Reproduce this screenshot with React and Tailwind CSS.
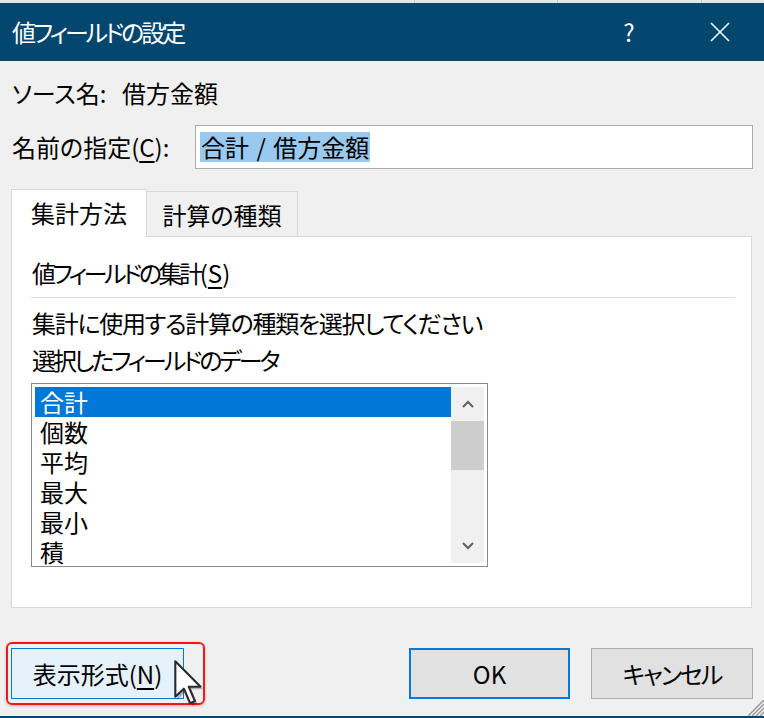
import React from "react";

const items = ["合計", "個数", "平均", "最大", "最小", "積"];

// Windows-style arrow pointer
const Pointer = () => (
  <svg width="30" height="46" viewBox="0 0 14 21.5" className="absolute left-[174px] top-[660px]">
    <path d="M1.6 1.6 L1.6 18.6 L5.6 14.6 L8.6 21.4 L10.9 20.4 L8 13.7 L13.6 13.7 Z" fill="#000" opacity="0.25" />
    <path d="M0.6 0.6 L0.6 17.2 L4.6 13.4 L7.5 20.2 L9.8 19.2 L6.9 12.5 L12.4 12.5 Z" fill="#fff" stroke="#2b2b35" strokeWidth="1" strokeLinejoin="round" />
  </svg>
);

const Grip = () => (
  <svg width="16" height="16" viewBox="0 0 16 16" className="absolute right-0 bottom-[2px]">
    {[0, 4, 8, 12].map((o) => (
      <line key={o} x1={o} y1="16" x2="16" y2={o} stroke="#9a9a9a" strokeWidth="1.5" />
    ))}
  </svg>
);

export default function App() {
  return (
    <div className="relative w-[764px] h-[718px] overflow-hidden bg-[#f0f0f0] text-black flex flex-col font-['Noto_Sans_CJK_JP','Noto_Sans',sans-serif] [font-feature-settings:'palt'] text-[24px] leading-[30px]">
      {/* spreadsheet peeking behind the dialog */}
      <div className="h-[3px] bg-[#e6e6e6] flex">
        <div className="w-[415px] border-r border-[#c8c8c8]"></div>
        <div className="w-[143px] border-r border-[#c8c8c8]"></div>
        <div className="w-[144px] border-r border-[#c8c8c8]"></div>
      </div>

      {/* title bar */}
      <div className="h-[58px] bg-[#03466e] text-white flex items-center pl-3 pr-[34px]">
        <span className="flex-1 tracking-[-3px]">値フィールドの設定</span>
        <span className="w-[20px] text-center">?</span>
        <svg width="20" height="20" viewBox="0 0 20 20" className="ml-[71px]">
          <path d="M1 1 L19 19 M19 1 L1 19" stroke="#fff" strokeWidth="1.6" />
        </svg>
      </div>

      {/* source name */}
      <div className="mt-[17px] ml-3 flex">
        <span className="w-[110px]">ソース名:</span>
        <span>借方金額</span>
      </div>

      {/* custom name */}
      <div className="mt-[17px] flex items-center">
        <span className="ml-3 w-[183px]">
          名前の指定(<u className="underline-offset-4">C</u>):
        </span>
        <div className="w-[558px] h-[44px] bg-white border border-[#aaaaaa] flex items-center pl-[4px]">
          <span className="bg-[#99c9ef] px-px">
            合計 <span className="mx-[2px]">/</span> 借方金額
          </span>
        </div>
      </div>

      {/* tabs */}
      <div className="mt-[20px] ml-[11px] flex items-end h-[48px]">
        <div className="relative z-10 w-[136px] h-[48px] bg-white border border-b-0 border-[#d9d9d9] flex items-center justify-center pb-[2px]">
          集計方法
        </div>
        <div className="w-[151px] h-[46px] bg-[#f0f0f0] border-t border-r border-[#d9d9d9] flex items-center justify-center">
          計算の種類
        </div>
      </div>

      {/* panel */}
      <div className="-mt-px ml-[11px] w-[741px] h-[372px] bg-white border border-[#d9d9d9] pl-[20px] pr-[16px] pt-[21px] flex flex-col">
        <div>
          <span className="tracking-[-3.4px]">値フィールドの集計</span>(<u className="underline-offset-4">S</u>)
        </div>
        <div className="mt-[9px] -ml-px h-px bg-[#dcdcdc]"></div>
        <div className="mt-[10px] tracking-[-1.3px]">集計に使用する計算の種類を選択してください</div>
        <div className="mt-[7px] tracking-[-3px]">選択したフィールドのデータ</div>

        {/* list box */}
        <div className="mt-[8px] -ml-px w-[457px] h-[184px] border border-[#8a8a8a] p-[3px] flex overflow-hidden">
          <div className="w-[416px] flex flex-col">
            {items.map((it, i) => (
              <div
                key={it}
                className={`h-[30px] shrink-0 pl-[5px] ${i === 0 ? "bg-[#0078d7] text-white" : ""}`}
              >
                {it}
              </div>
            ))}
          </div>
          <div className="w-[33px] h-[176px] bg-[#f0f0f0] flex flex-col">
            <div className="h-[34px] flex items-center justify-center">
              <svg width="12" height="8" viewBox="0 0 12 8">
                <path d="M1 7 L6 2 L11 7" fill="none" stroke="#606060" strokeWidth="2" />
              </svg>
            </div>
            <div className="h-[49px] bg-[#cdcdcd]"></div>
            <div className="flex-1"></div>
            <div className="h-[34px] flex items-center justify-center">
              <svg width="12" height="8" viewBox="0 0 12 8">
                <path d="M1 1 L6 6 L11 1" fill="none" stroke="#606060" strokeWidth="2" />
              </svg>
            </div>
          </div>
        </div>
      </div>

      {/* buttons */}
      <div className="mt-[40px] flex">
        <div className="ml-[11px] w-[173px] h-[51px] bg-[#e5f1fb] border border-[#0078d7] flex items-center justify-center">
          表示形式(<u className="underline-offset-4">N</u>)
        </div>
        <div className="ml-[225px] w-[161px] h-[51px] bg-[#e1e1e1] border-2 border-[#0078d7] flex items-center justify-center">
          OK
        </div>
        <div className="ml-[21px] w-[162px] h-[51px] bg-[#e1e1e1] border border-[#adadad] flex items-center justify-center tracking-[-2px]">
          キャンセル
        </div>
      </div>

      <div className="absolute left-0 right-0 bottom-0 h-[2px] bg-[#03466e]"></div>
      <Grip />

      {/* highlight annotation */}
      <div className="absolute left-[6px] top-[642px] w-[199px] h-[63px] border-2 border-[#f01818] rounded-[6px] shadow-[0_1px_3px_rgba(0,0,0,0.25)]"></div>
      <Pointer />
    </div>
  );
}
